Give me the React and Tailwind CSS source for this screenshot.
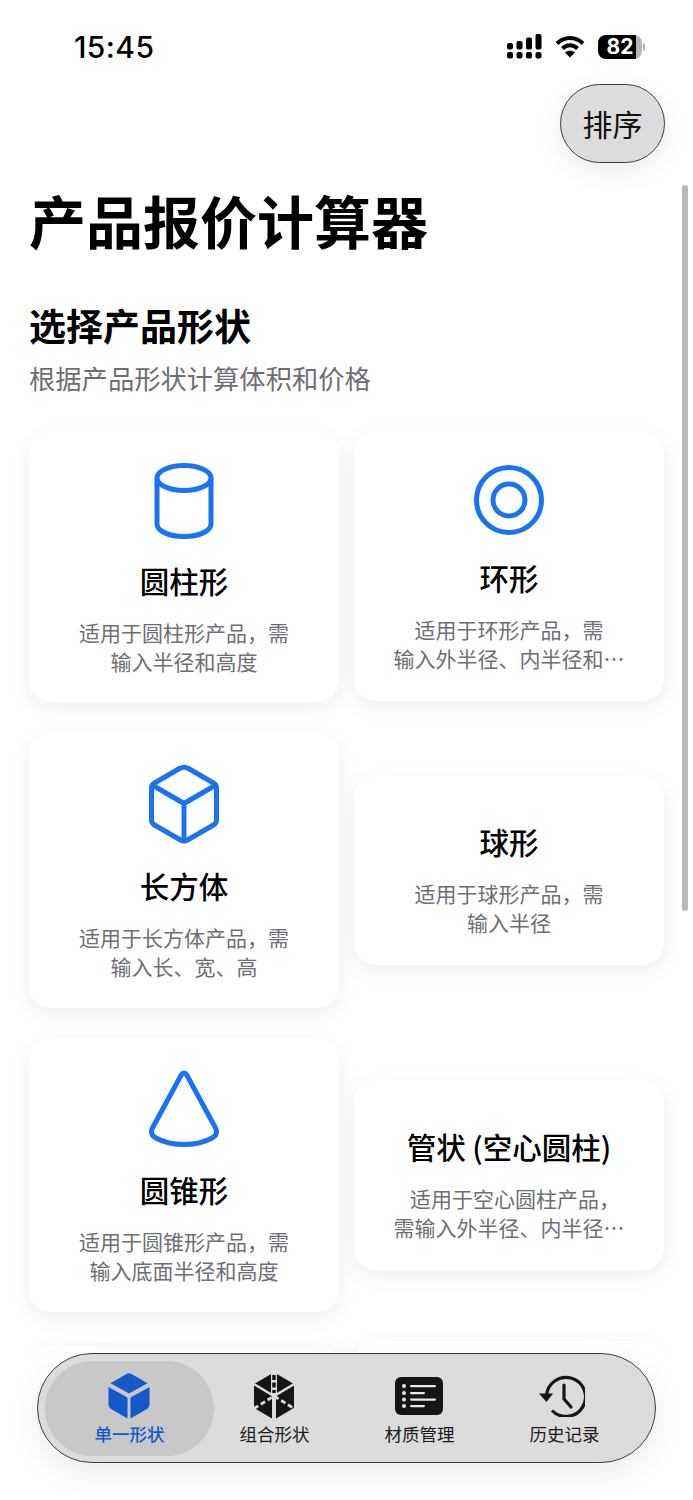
const cjk = { fontFamily: '"Noto Sans CJK SC", "Noto Sans", sans-serif' }

function CylinderIcon() {
  return (
    <svg width="64" height="76" viewBox="0 0 64 76" fill="none" stroke="#1A73F0" strokeWidth="5">
      <ellipse cx="32" cy="15" rx="27" ry="12.5" />
      <path d="M5 15v46c0 7 12 12.500 27 12.500S59 68 59 61V15" />
    </svg>
  )
}

function RingIcon() {
  return (
    <svg width="72" height="72" viewBox="0 0 72 72" fill="none" stroke="#1A73F0" strokeWidth="5">
      <circle cx="36" cy="36" r="32.500" />
      <circle cx="36" cy="36" r="16" />
    </svg>
  )
}

function BoxIcon() {
  return (
    <svg width="72" height="80" viewBox="0 0 72 80" fill="none" stroke="#1A73F0" strokeWidth="5" strokeLinejoin="round">
      <path d="M31.500 4.500a9 9 0 0 1 9 0l25 14.500a6 6 0 0 1 3 5.200v31.600a6 6 0 0 1-3 5.200l-26 15a7 7 0 0 1-7 0l-26-15a6 6 0 0 1-3-5.200V24.200a6 6 0 0 1 3-5.200z" />
      <path d="M5 21.500 36 39.500l31-18M36 39.500v38" />
    </svg>
  )
}

function ConeIcon() {
  return (
    <svg width="72" height="78" viewBox="0 0 72 78" fill="none" stroke="#1A73F0" strokeWidth="5" strokeLinejoin="round">
      <path d="M33.500 4.500a2.900 2.900 0 0 1 5 0L67 57c3 5.500 1.500 8.500-3 11-7 4-18 6.500-28 6.500S15 72 8 68c-4.500-2.500-6-5.500-3-11z" />
    </svg>
  )
}

function ShapeCard({ icon, title, lines, className }) {
  return (
    <div className={`flex flex-col items-center rounded-[22px] bg-white shadow-[0_6px_22px_rgba(0,0,0,0.07)] ${className}`}>
      {icon}
      <div className={`${icon ? 'mt-[23px]' : ''} text-[29.500px] leading-[36px] font-medium text-black`}>{title}</div>
      <div className="mt-[20px] w-[260px] text-center text-[21px] leading-[28.500px] text-[#6e6e73]">
        {lines.map((l) => (
          <div key={l} className={`whitespace-nowrap ${l.endsWith('，') ? 'pl-[12px]' : ''}`}>{l}</div>
        ))}
      </div>
    </div>
  )
}

function StatusBar() {
  return (
    <div className="flex h-[84px] items-start justify-between pl-[74px] pr-[48px] pt-[29px]">
      <span className="text-[30px] leading-[36px] font-medium text-black tracking-[0.4px]" style={{ fontFamily: 'Inter, sans-serif' }}>15:45</span>
      <div className="flex items-center gap-[13px] pt-[5px]">
        <svg width="35" height="25" viewBox="0 0 35 25" fill="#000">
          <rect x="0" y="9" width="6" height="6.500" rx="2" />
          <rect x="0" y="18" width="6" height="6.500" rx="2" />
          <rect x="9.500" y="7" width="6" height="8.500" rx="2" />
          <rect x="9.500" y="18" width="6" height="6.500" rx="2" />
          <rect x="19" y="3.500" width="6" height="12" rx="2" />
          <rect x="19" y="18" width="6" height="6.500" rx="2" />
          <rect x="28.500" y="0" width="6" height="15.500" rx="2" />
          <rect x="28.500" y="18" width="6" height="6.500" rx="2" />
        </svg>
        <svg width="30" height="23" viewBox="0 0 30 23" fill="none" stroke="#000" strokeWidth="4">
          <path d="M2 8.500C9.500 1 20.500 1 28 8.500" />
          <path d="M7.500 13.500c4.500-4.300 10.500-4.300 15 0" />
          <path d="M15 22.500l-5-5c3-2.400 7-2.400 10 0z" fill="#000" stroke="none" />
        </svg>
        <div className="flex items-center">
          <div className="h-[24px] w-[44px] overflow-hidden rounded-[8px] bg-[#b5b5b5]">
            <div className="flex h-full w-[38px] items-center justify-center bg-black pl-[6px] text-[21px] leading-none font-bold text-white" style={{ fontFamily: 'Inter, sans-serif' }}>82</div>
          </div>
          <div className="ml-[1px] h-[8px] w-[2px] rounded-r-full bg-[#b5b5b5]" />
        </div>
      </div>
    </div>
  )
}

function TabCubeIcon() {
  return (
    <svg width="42" height="46" viewBox="0 0 42 46" fill="#1558C8">
      <path d="M18.500 1a5 5 0 0 1 5 0l16 9.200L21 20.500 2.500 10.200z" />
      <path d="M0.500 14 19.500 24.500V45.500L3 36a5 5 0 0 1-2.500-4.500z" />
      <path d="M41.500 14 22.500 24.500V45.500L39 36a5 5 0 0 0 2.500-4.500z" />
    </svg>
  )
}

function TabComboIcon() {
  return (
    <svg width="42" height="46" viewBox="0 0 42 46">
      <path d="M19 0.500a4 4 0 0 1 4 0l17 10a2 2 0 0 1 1 2v21a2 2 0 0 1-1 2l-17 10a4 4 0 0 1-4 0l-17-10a2 2 0 0 1-1-2v-21a2 2 0 0 1 1-2z" fill="#151515" />
      <path d="M21 0v23" stroke="#dcdcdc" strokeWidth="6" />
      <path d="M21 2v18" stroke="#151515" strokeWidth="3.500" strokeDasharray="5 2.500" />
      <path d="M0 10.500 21 23 42 10.500" stroke="#dcdcdc" strokeWidth="2.500" fill="none" />
      <path d="M1 35.500 21 23 41 35.500" stroke="#dcdcdc" strokeWidth="2.800" strokeDasharray="5 3" fill="none" />
      <path d="M19 23h4v23h-4z" fill="#dcdcdc" />
    </svg>
  )
}

function TabListIcon() {
  return (
    <svg width="48" height="38" viewBox="0 0 48 38">
      <rect width="48" height="38" rx="6" fill="#151515" />
      <g fill="#e6e6e6">
        <circle cx="9" cy="9" r="2" />
        <circle cx="9" cy="16" r="2" />
        <circle cx="9" cy="22.500" r="2" />
        <circle cx="9" cy="29" r="2" />
        <rect x="15" y="8" width="26" height="2.200" rx="1.100" />
        <rect x="15" y="15" width="15" height="2.200" rx="1.100" />
        <rect x="15" y="21.500" width="26" height="2.200" rx="1.100" />
        <rect x="15" y="28" width="15" height="2.200" rx="1.100" />
      </g>
    </svg>
  )
}

function TabHistoryIcon() {
  return (
    <svg width="46" height="42" viewBox="0 0 46 42" fill="none" stroke="#151515" strokeWidth="3.200" className="ml-[-3px]">
      <path d="M7.500 21A19.500 19.500 0 1 1 13 35.500" />
      <path d="M0 18.500h14L7.500 27z" fill="#151515" stroke="none" />
      <path d="M25 10v14l7 8" strokeLinecap="round" />
    </svg>
  )
}

function TabItem({ icon, label, active }) {
  return (
    <div className={`flex h-[95px] flex-col items-center pt-[12px] ${active ? 'mr-[-12px] w-[169px] rounded-[48px] bg-[#c8c8c8] text-[#1558C8]' : 'w-[145px] text-[#1a1a1a]'}`}>
      <div className="ml-[-2px] flex h-[46px] items-center">{icon}</div>
      <div className={`mt-[4px] text-[17.500px] leading-[22px] ${active ? 'font-medium' : 'font-normal'}`}>{label}</div>
    </div>
  )
}

export default function App() {
  return (
    <div className="relative h-[1500px] w-[693px] overflow-hidden bg-white" style={cjk}>
      <StatusBar />

      <div className="flex justify-end pr-[28px]">
        <div className="flex h-[79px] w-[105px] items-center justify-center rounded-[40px] border border-[#3c3c3c] bg-[#dcdcdc] text-[30px] text-[#111] shadow-[0_8px_28px_rgba(0,0,0,0.08)]">排序</div>
      </div>

      <h1 className="mt-[21px] pl-[29px] text-[57px] leading-[70px] font-bold text-black">产品报价计算器</h1>
      <h2 className="mt-[48px] pl-[29px] text-[37px] leading-[46px] font-bold text-black">选择产品形状</h2>
      <p className="mt-[12px] pl-[29px] text-[26.300px] leading-[36px] text-[#6e6e73]">根据产品形状计算体积和价格</p>

      <div className="mt-[35px] flex gap-[15px] pl-[29px]">
        <div className="flex w-[310px] flex-col">
          <ShapeCard className="h-[271px] pt-[32px]" icon={<CylinderIcon />} title="圆柱形" lines={['适用于圆柱形产品，需', '输入半径和高度']} />
          <ShapeCard className="mt-[29px] h-[277px] pt-[33px]" icon={<BoxIcon />} title="长方体" lines={['适用于长方体产品，需', '输入长、宽、高']} />
          <ShapeCard className="mt-[30px] h-[274px] pt-[32px]" icon={<ConeIcon />} title="圆锥形" lines={['适用于圆锥形产品，需', '输入底面半径和高度']} />
          <div className="mt-[34px] h-[200px] rounded-[22px] bg-white shadow-[0_6px_22px_rgba(0,0,0,0.07)]" />
        </div>
        <div className="flex w-[310px] flex-col">
          <ShapeCard className="h-[270px] pt-[33px]" icon={<RingIcon />} title="环形" lines={['适用于环形产品，需', '输入外半径、内半径和…']} />
          <ShapeCard className="mt-[75px] h-[189px] pt-[47px]" title="球形" lines={['适用于球形产品，需', '输入半径']} />
          <ShapeCard className="mt-[115px] h-[190px] pt-[48px]" title="管状 (空心圆柱)" lines={['适用于空心圆柱产品，', '需输入外半径、内半径…']} />
          <div className="mt-[71px] h-[200px] rounded-[22px] bg-white shadow-[0_6px_22px_rgba(0,0,0,0.07)]" />
        </div>
      </div>

      {/* scroll indicator */}
      <div className="absolute left-[682px] top-[185px] h-[726px] w-[6px] rounded-full bg-[#b8b8b8]" />

      {/* tab bar */}
      <div className="absolute bottom-[-10px] left-[-10px] h-[157px] w-[713px] bg-white blur-[3px]" />
      <div className="absolute left-[37px] top-[1353px] flex h-[110px] w-[619px] items-center rounded-[55px] border border-[#3c3c3c] bg-[#dcdcdc] pl-[7px] shadow-[0_10px_34px_rgba(0,0,0,0.08)]">
        <TabItem active icon={<TabCubeIcon />} label="单一形状" />
        <TabItem icon={<TabComboIcon />} label="组合形状" />
        <TabItem icon={<TabListIcon />} label="材质管理" />
        <TabItem icon={<TabHistoryIcon />} label="历史记录" />
      </div>
    </div>
  )
}
